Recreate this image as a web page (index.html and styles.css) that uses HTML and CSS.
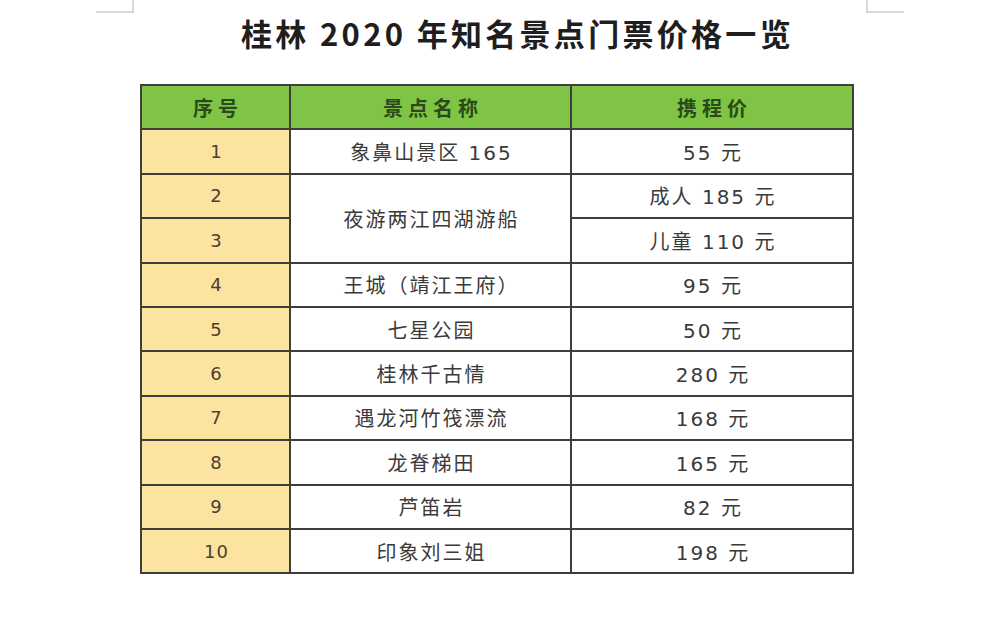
FILE: index.html
```html
<!DOCTYPE html>
<html lang="zh">
<head>
<meta charset="utf-8">
<link rel="stylesheet" href="styles.css">
</head>
<body>
<div class="page">
  <span class="corner corner-left"></span>
  <span class="corner corner-right"></span>
  <h1 class="title">桂林 2020 年知名景点门票价格一览</h1>
  <table class="prices">
    <colgroup>
      <col class="c-no"><col class="c-name"><col class="c-price">
    </colgroup>
    <thead>
      <tr><th>序号</th><th>景点名称</th><th>携程价</th></tr>
    </thead>
    <tbody>
      <tr><td class="no">1</td><td>象鼻山景区 165</td><td>55 元</td></tr>
      <tr><td class="no">2</td><td rowspan="2">夜游两江四湖游船</td><td>成人 185 元</td></tr>
      <tr><td class="no">3</td><td>儿童 110 元</td></tr>
      <tr><td class="no">4</td><td>王城（靖江王府）</td><td>95 元</td></tr>
      <tr><td class="no">5</td><td>七星公园</td><td>50 元</td></tr>
      <tr><td class="no">6</td><td>桂林千古情</td><td>280 元</td></tr>
      <tr><td class="no">7</td><td>遇龙河竹筏漂流</td><td>168 元</td></tr>
      <tr><td class="no">8</td><td>龙脊梯田</td><td>165 元</td></tr>
      <tr><td class="no">9</td><td>芦笛岩</td><td>82 元</td></tr>
      <tr><td class="no">10</td><td>印象刘三姐</td><td>198 元</td></tr>
    </tbody>
  </table>
</div>
</body>
</html>
```

FILE: styles.css
```css
html, body {
  margin: 0;
  padding: 0;
  background: #ffffff;
}

.page {
  position: relative;
  width: 985px;
  height: 617px;
  overflow: hidden;
  padding-top: 14px;
  box-sizing: border-box;
}

.corner {
  position: absolute;
  top: 0;
  width: 36px;
  height: 11px;
  border-color: #d8d8d8;
  border-style: solid;
  border-width: 0;
}

.corner-left {
  left: 96px;
  border-right-width: 2px;
  border-bottom-width: 2px;
}

.corner-right {
  left: 866px;
  border-left-width: 2px;
  border-bottom-width: 2px;
}

.title {
  margin: 0 0 32px 0;
  padding-left: 50px;
  text-align: center;
  font-family: "Noto Sans CJK SC", "Noto Sans", sans-serif;
  font-size: 31px;
  line-height: 38px;
  font-weight: 700;
  letter-spacing: 3.3px;
  color: #1e1e1e;
}

.prices {
  margin-left: 140px;
  width: 712px;
  border-collapse: collapse;
  border: 2px solid #3a3a3a;
  font-family: "DejaVu Sans", "Noto Sans CJK SC", sans-serif;
  font-size: 20px;
  letter-spacing: 2px;
  color: #3a3a3a;
  table-layout: fixed;
}

.c-no { width: 149px; }
.c-name { width: 281px; }
.c-price { width: 282px; }

.prices th,
.prices td {
  border: 2px solid #3e3e3e;
  height: 42.4px;
  padding: 0 0 0 2px;
  text-align: center;
  vertical-align: middle;
}

.prices th {
  background: #80c446;
  color: #2b4a1a;
  font-family: "Noto Sans CJK SC", sans-serif;
  font-weight: 700;
  font-size: 20px;
  letter-spacing: 5px;
  padding-left: 5px;
}

.prices td {
  background: #ffffff;
}

.prices td.no {
  background: #fde3a0;
  color: #4a4030;
  font-size: 18px;
  letter-spacing: 1px;
}
```
